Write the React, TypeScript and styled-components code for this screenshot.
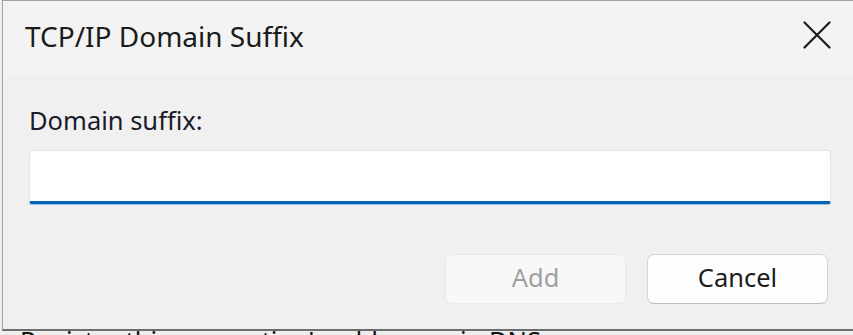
import React from "react";
import styled, { createGlobalStyle } from "styled-components";

const GlobalStyle = createGlobalStyle`
  html, body {
    margin: 0;
    padding: 0;
    background: #f0f0f0;
  }
  body {
    font-family: "Noto Sans", "Open Sans", Arial, sans-serif;
    -webkit-font-smoothing: antialiased;
  }
`;

const Screen = styled.div`
  width: 853px;
  height: 335px;
  overflow: hidden;
  display: flex;
  flex-direction: column;
  background: #eeeeee;
`;

const Dialog = styled.div`
  flex-shrink: 0;
  height: 328px;
  margin-left: 2px;
  border-left: 1px solid #a3a3a3;
  border-top: 1px solid #a0a0a0;
  border-bottom: 2px solid #6e6e6e;
  display: flex;
  flex-direction: column;
  background: #f0f0f0;
`;

const TitleBar = styled.div`
  height: 74px;
  flex-shrink: 0;
  display: flex;
  align-items: flex-start;
  justify-content: space-between;
  padding-left: 22px;
  background: #f3f3f3;
`;

const Title = styled.div`
  margin-top: 16px;
  font-size: 28px;
  line-height: 38px;
  color: #1b1b1b;
`;

const CloseButton = styled.button`
  width: 72px;
  height: 68px;
  border: none;
  background: transparent;
  padding: 0;
  display: flex;
  align-items: center;
  justify-content: center;
  color: #1b1b1b;
  cursor: default;
`;

const Body = styled.div`
  flex: 1;
  display: flex;
  flex-direction: column;
  padding: 28px 22px 0 26px;
`;

const Label = styled.label`
  font-size: 25.5px;
  line-height: 34px;
  color: #1a1a2a;
`;

const Input = styled.input`
  box-sizing: border-box;
  margin-top: 13px;
  width: 100%;
  height: 54px;
  background: #ffffff;
  border: 1px solid #e3e3e3;
  border-bottom: 3px solid #0063b9;
  border-radius: 3px;
  box-shadow: 0 1px 0 rgba(0, 99, 185, 0.35);
  outline: none;
  font: inherit;
  font-size: 25.5px;
  padding: 0 12px;
`;

const ButtonRow = styled.div`
  margin-top: 50px;
  margin-right: 3px;
  display: flex;
  justify-content: flex-end;
  gap: 21px;
`;

const Button = styled.button<{ $disabled?: boolean }>`
  box-sizing: border-box;
  width: 181px;
  height: 50px;
  border-radius: 7px;
  font-family: inherit;
  font-size: 25.5px;
  line-height: 1;
  padding: 0 0 2px;
  display: flex;
  align-items: center;
  justify-content: center;
  background: ${(p) => (p.$disabled ? "#f8f8f8" : "#fdfdfd")};
  color: ${(p) => (p.$disabled ? "#a0a0a0" : "#1b1b1b")};
  border: 1px solid ${(p) => (p.$disabled ? "#eaeaea" : "#d4d4d4")};
  border-bottom-color: ${(p) => (p.$disabled ? "#eaeaea" : "#bdbdbd")};
  cursor: default;
`;

const BehindRow = styled.div`
  padding-left: 20px;
  font-size: 25.5px;
  line-height: 18px;
  color: #111111;
  white-space: nowrap;
  background: #eeeeee;
`;

const CloseIcon = () => (
  <svg width="28" height="28" viewBox="0 0 28 28" aria-hidden="true">
    <path d="M1.5 1.5 L26.5 26.5 M26.5 1.5 L1.5 26.5" stroke="currentColor" strokeWidth="2.2" strokeLinecap="round" fill="none" />
  </svg>
);

export default function App() {
  return (
    <>
      <GlobalStyle />
      <Screen>
        <Dialog>
          <TitleBar>
            <Title>TCP/IP Domain Suffix</Title>
            <CloseButton aria-label="Close">
              <CloseIcon />
            </CloseButton>
          </TitleBar>
          <Body>
            <Label htmlFor="suffix">Domain suffix:</Label>
            <Input id="suffix" type="text" />
            <ButtonRow>
              <Button $disabled disabled>Add</Button>
              <Button>Cancel</Button>
            </ButtonRow>
          </Body>
        </Dialog>
        <BehindRow>Register this connection's addresses in DNS</BehindRow>
      </Screen>
    </>
  );
}
